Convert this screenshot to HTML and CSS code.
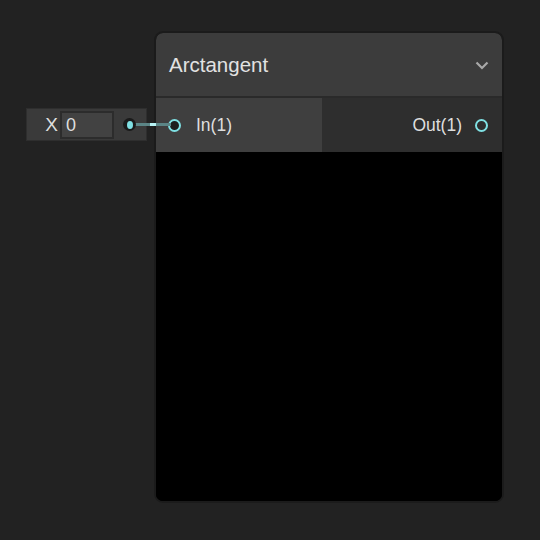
FILE: index.html
```html
<!DOCTYPE html>
<html>
<head>
<meta charset="utf-8">
<link rel="stylesheet" href="styles.css">
</head>
<body>
<div class="canvas">
  <div class="input-panel">
    <span class="axis">X</span>
    <div class="field">0</div>
    <span class="out-dot"><span class="out-core"></span></span>
  </div>
  <div class="wire"><span class="wire-dash"></span></div>
  <div class="node">
    <div class="header">
      <span class="title">Arctangent</span>
      <svg class="chevron" width="14" height="9" viewBox="0 0 14 9"><path d="M1.5 1.5 L7 7 L12.5 1.5" fill="none" stroke="#a8a8a8" stroke-width="2.2"/></svg>
    </div>
    <div class="ports">
      <div class="port-in">
        <span class="ring"></span>
        <span class="label">In(1)</span>
      </div>
      <div class="port-out">
        <span class="label">Out(1)</span>
        <span class="ring"></span>
      </div>
    </div>
    <div class="preview"></div>
  </div>
</div>
</body>
</html>
```
FILE: styles.css
```css
html, body {
  margin: 0;
  padding: 0;
  background: #222222;
  font-family: "Liberation Sans", Arial, sans-serif;
  color: #dedede;
}
.canvas {
  width: 540px;
  height: 540px;
  display: flex;
  align-items: flex-start;
  padding: 31px 0 0 26px;
  box-sizing: border-box;
}
.input-panel {
  margin-top: 77px;
  width: 121px;
  height: 33px;
  box-sizing: border-box;
  background: #3a3a3a;
  border: 1px solid #2e2e2e;
  display: flex;
  align-items: center;
  position: relative;
}
.axis {
  font-size: 19px;
  width: 33px;
  box-sizing: border-box;
  text-align: right;
  padding-right: 2px;
}
.field {
  width: 54px;
  height: 28px;
  box-sizing: border-box;
  border: 2px solid #2c2c2c;
  background: #424242;
  font-size: 18px;
  line-height: 24px;
  padding-left: 4px;
}
.out-dot {
  position: absolute;
  left: 96px;
  top: 9px;
  width: 13px;
  height: 13px;
  border-radius: 50%;
  background: #1a1a1a;
  display: flex;
  align-items: center;
  justify-content: center;
  z-index: 2;
}
.out-core {
  width: 6px;
  height: 8px;
  border-radius: 50%;
  background: #7fe0e3;
}
.wire {
  margin-top: 92px;
  margin-left: -12px;
  width: 36px;
  height: 3px;
  background: #5b8586;
  position: relative;
  z-index: 1;
  display: flex;
  justify-content: center;
}
.wire-dash {
  width: 6px;
  height: 3px;
  background: #b8f3f4;
}
.node {
  margin-left: -17px;
  width: 350px;
  height: 472px;
  box-sizing: border-box;
  border: 2px solid #1b1b1b;
  border-radius: 9px;
  background: #000;
  display: flex;
  flex-direction: column;
  overflow: hidden;
  position: relative;
  z-index: 0;
}
.header {
  height: 63px;
  background: #3c3c3c;
  display: flex;
  align-items: center;
  justify-content: space-between;
  padding: 0 13px 0 13px;
  border-bottom: 2px solid #2a2a2a;
  flex-shrink: 0;
}
.title {
  font-size: 20.5px;
  color: #e2e2e2;
  margin-top: 0;
}
.chevron {
  margin-top: 2px;
}
.ports {
  height: 54px;
  display: flex;
  flex-shrink: 0;
}
.port-in {
  width: 166px;
  background: #3f3f3f;
  display: flex;
  align-items: center;
  padding-left: 12px;
  box-sizing: border-box;
}
.port-out {
  flex: 1;
  background: #2e2e2e;
  display: flex;
  align-items: center;
  justify-content: flex-end;
  padding-right: 14px;
}
.ring {
  width: 13px;
  height: 13px;
  box-sizing: border-box;
  border: 2px solid #7fe0e3;
  border-radius: 50%;
  background: #1e1e1e;
}
.port-out .ring { background: transparent; }
.port-in .label {
  margin-left: 15px;
  font-size: 17.5px;
}
.port-out .label {
  margin-right: 13px;
  font-size: 17.5px;
}
.preview {
  flex: 1;
  background: #000;
}
```
